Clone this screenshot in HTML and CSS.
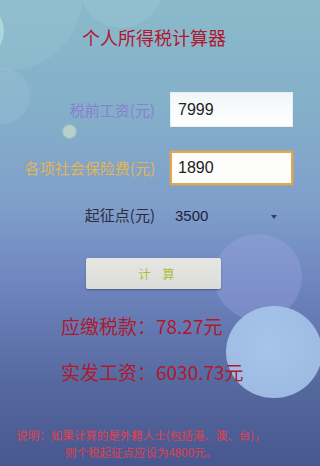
FILE: index.html
```html
<!DOCTYPE html>
<html lang="zh-CN">
<head>
<meta charset="utf-8">
<title>个人所得税计算器</title>
<link rel="stylesheet" href="styles.css">
</head>
<body>
<div class="screen">
  <div class="bokeh" aria-hidden="true">
    <span class="b b1"></span>
    <span class="b b2"></span>
    <span class="b b3"></span>
    <span class="b b4"></span>
    <span class="b b5"></span>
    <span class="b b6"></span>
    <span class="b b7"></span>
  </div>
  <div class="content">
    <h1 class="title">个人所得税计算器</h1>
    <div class="form">
      <div class="row row-salary">
        <label class="label label-purple">税前工资(元)</label>
        <div class="input">7999</div>
      </div>
      <div class="row row-insurance">
        <label class="label label-orange">各项社会保险费(元)</label>
        <div class="input input-focus">1890</div>
      </div>
      <div class="row row-select">
        <label class="label label-dark">起征点(元)</label>
        <div class="select">
          <span class="select-value">3500</span>
          <span class="caret"></span>
        </div>
      </div>
    </div>
    <div class="btn-wrap">
      <button class="btn"><span>计</span><span>算</span></button>
    </div>
    <div class="result r1">应缴税款：78.27元</div>
    <div class="result r2">实发工资：6030.73元</div>
    <div class="note">
      <span class="note-line">说明：如果计算的是外籍人士(包括港、澳、台)，</span>
      <span class="note-line">则个税起征点应设为4800元。</span>
    </div>
  </div>
</div>
</body>
</html>
```

FILE: styles.css
```css
html, body {
  margin: 0;
  padding: 0;
  width: 100%;
  height: 100%;
  overflow: hidden;
}

body {
  font-family: "Noto Sans CJK SC", "Noto Sans", "Liberation Sans", sans-serif;
  background: #4a5c98;
}

.screen {
  position: relative;
  width: 100%;
  height: 100vh;
  min-height: 466px;
  overflow: hidden;
  background: linear-gradient(180deg, #8bbacb 0%, #84b0c9 22%, #7f9fca 44%, #6f86c0 60%, #56699f 82%, #47578f 100%);
}

.bokeh {
  position: absolute;
  inset: 0;
}

.b {
  position: absolute;
  border-radius: 50%;
}

.b1 {
  left: -62px;
  top: -80px;
  width: 144px;
  height: 150px;
  background: rgba(170, 210, 222, 0.2);
}

.b2 {
  left: -86px;
  top: -4px;
  width: 90px;
  height: 70px;
  background: rgba(205, 242, 236, 0.5);
}

.b3 {
  left: -24px;
  top: 68px;
  width: 54px;
  height: 56px;
  background: rgba(170, 205, 225, 0.22);
}

.b4 {
  left: 63px;
  top: 125px;
  width: 13px;
  height: 13px;
  background: rgba(205, 225, 200, 0.7);
  box-shadow: 0 0 3px rgba(220, 235, 210, 0.6);
}

.b5 {
  left: 80px;
  top: -52px;
  width: 82px;
  height: 80px;
  background: rgba(175, 212, 225, 0.22);
}

.b6 {
  left: 214px;
  top: 234px;
  width: 88px;
  height: 86px;
  background: rgba(160, 170, 225, 0.35);
}

.b7 {
  left: 226px;
  top: 306px;
  width: 96px;
  height: 92px;
  background: radial-gradient(circle at 45% 45%, rgba(170, 200, 236, 0.95) 0%, rgba(165, 195, 235, 0.9) 70%, rgba(190, 215, 245, 0.95) 100%);
}

.content {
  position: relative;
  width: 308px;
  display: flex;
  flex-direction: column;
}

.title {
  margin: 26px 0 0;
  font-size: 18px;
  line-height: 22px;
  font-weight: normal;
  color: #b01830;
  text-align: center;
}

.form {
  margin-top: 44px;
  display: flex;
  flex-direction: column;
}

.row {
  display: grid;
  grid-template-columns: 1fr 123px;
  column-gap: 15px;
  padding-right: 15px;
  align-items: center;
}

.row-insurance {
  margin-top: 24px;
}

.row-select {
  margin-top: 15px;
  height: 30px;
}

.label {
  text-align: right;
  font-size: 15px;
  line-height: 20px;
  white-space: nowrap;
}

.label-purple {
  color: #8a7ed0;
}

.label-orange {
  color: #e6b452;
}

.label-dark {
  color: #2c2c3e;
}

.input {
  box-sizing: border-box;
  height: 35px;
  padding: 0 7px;
  display: flex;
  align-items: center;
  font-family: "Liberation Sans", "Noto Sans", sans-serif;
  font-size: 16px;
  color: #222;
  background: linear-gradient(180deg, #f2f6f8 0%, #ffffff 100%);
  border: 1px solid #e6eef2;
}

.input-focus {
  height: 34px;
  padding-left: 6px;
  border: 2px solid #e8a548;
  box-shadow: 0 0 2px rgba(240, 170, 80, 0.8);
  background: #fdfdfb;
}

.select {
  height: 30px;
  display: flex;
  align-items: center;
  justify-content: space-between;
  padding: 0 16px 0 5px;
}

.select-value {
  font-family: "Liberation Sans", "Noto Sans", sans-serif;
  font-size: 15px;
  color: #1e2238;
}

.caret {
  width: 0;
  height: 0;
  border-left: 3.5px solid transparent;
  border-right: 3.5px solid transparent;
  border-top: 4px solid #3a3f5a;
  margin-top: 3px;
}

.btn-wrap {
  margin-top: 28px;
  display: flex;
  padding-left: 86px;
}

.btn {
  width: 135px;
  height: 31px;
  border: none;
  border-radius: 2px;
  background: linear-gradient(180deg, #e6e6e2 0%, #dcdcd8 100%);
  box-shadow: 0 1px 2px rgba(30, 40, 70, 0.45);
  display: flex;
  align-items: center;
  justify-content: center;
  gap: 12px;
  padding: 0 0 0 6px;
  font-family: "Noto Sans CJK SC", sans-serif;
  font-size: 12px;
  color: #a8c03a;
}

.result {
  font-size: 19px;
  line-height: 26px;
  color: #b0182c;
  padding-left: 61px;
}

.r1 {
  margin-top: 24px;
}

.r2 {
  margin-top: 20px;
}

.note {
  margin-top: 42px;
  display: flex;
  flex-direction: column;
  align-items: center;
  font-size: 11.5px;
  line-height: 17px;
  color: #e0404e;
  padding-right: 26px;
}

.note-line {
  display: block;
  white-space: nowrap;
}
```
